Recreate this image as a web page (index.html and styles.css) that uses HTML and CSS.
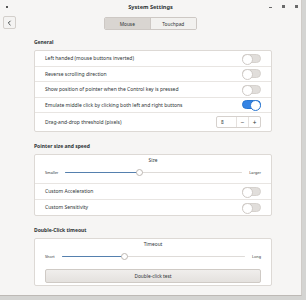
FILE: index.html
```html
<!DOCTYPE html>
<html lang="en">
<head>
    <meta charset="UTF-8">
    <title>System Settings</title>
    <link rel="stylesheet" href="styles.css">
</head>
<body>
<div class="window">
    <div class="titlebar">
        <span class="menu-dot"></span>
        <span class="title">System Settings</span>
        <div class="controls">
            <span class="ctl min"></span>
            <span class="ctl max"></span>
            <span class="ctl close"></span>
        </div>
    </div>

    <div class="headerbar">
        <button class="back">
            <svg width="5" height="6" viewBox="0 0 5 6"><path d="M3.5 0.8 L1.3 3 L3.5 5.2" fill="none" stroke="#2e3436" stroke-width="0.9"/></svg>
        </button>
        <div class="switcher">
            <span class="tab active">Mouse</span>
            <span class="tab">Touchpad</span>
        </div>
    </div>

    <div class="content">
        <h3>General</h3>
        <div class="listbox">
            <div class="row"><span>Left handed (mouse buttons inverted)</span><span class="switch"></span></div>
            <div class="row"><span>Reverse scrolling direction</span><span class="switch"></span></div>
            <div class="row"><span>Show position of pointer when the Control key is pressed</span><span class="switch"></span></div>
            <div class="row"><span>Emulate middle click by clicking both left and right buttons</span><span class="switch on"></span></div>
            <div class="row tall">
                <span>Drag-and-drop threshold (pixels)</span>
                <div class="spin">
                    <span class="value">8</span>
                    <span class="step">&minus;</span>
                    <span class="step">+</span>
                </div>
            </div>
        </div>

        <h3>Pointer size and speed</h3>
        <div class="listbox">
            <div class="row scale-row">
                <div class="scale-title">Size</div>
                <div class="scale">
                    <span class="mark">Smaller</span>
                    <div class="track"><div class="fill" style="width: 42%"></div><span class="thumb"></span></div>
                    <span class="mark">Larger</span>
                </div>
            </div>
            <div class="row"><span>Custom Acceleration</span><span class="switch"></span></div>
            <div class="row"><span>Custom Sensitivity</span><span class="switch"></span></div>
        </div>

        <h3>Double-Click timeout</h3>
        <div class="listbox">
            <div class="row scale-row plain">
                <div class="scale-title">Timeout</div>
                <div class="scale">
                    <span class="mark">Short</span>
                    <div class="track"><div class="fill" style="width: 34%"></div><span class="thumb"></span></div>
                    <span class="mark">Long</span>
                </div>
            </div>
            <div class="row button-row">
                <button class="test">Double-click test</button>
            </div>
        </div>
    </div>
</div>
</body>
</html>
```

FILE: styles.css
```css
* {
    margin: 0;
    padding: 0;
    box-sizing: border-box;
    font-family: 'Noto Sans', 'Liberation Sans', sans-serif;
}

body {
    background: #d4d4d2;
    width: 306px;
    height: 300px;
    overflow: hidden;
}

.window {
    width: 302px;
    height: 296px;
    background: #f6f5f4;
    color: #2e3436;
    border-right: 1px solid #cfcbc7;
    border-bottom: 1px solid #bdb9b5;
}

.titlebar {
    position: relative;
    height: 14px;
    display: flex;
    justify-content: center;
    align-items: center;
}

.title {
    font-size: 5.6px;
    font-weight: 700;
}

.menu-dot {
    position: absolute;
    left: 6px;
    top: 6px;
    width: 2px;
    height: 2px;
    background: #555;
}

.controls {
    position: absolute;
    right: 3px;
    top: 5px;
    display: flex;
    gap: 10px;
    align-items: center;
}

.ctl {
    display: block;
    width: 3px;
    height: 3px;
    background: #6a6a6a;
}

.ctl.min {
    height: 1px;
    margin-top: 2px;
}

.headerbar {
    position: relative;
    height: 19px;
    display: flex;
    justify-content: center;
    align-items: flex-start;
    padding-top: 3px;
}

.back {
    position: absolute;
    left: 3px;
    top: 2px;
    width: 13px;
    height: 13px;
    border: 1px solid #d3cfcb;
    border-radius: 2px;
    background: #f4f3f2;
    display: flex;
    justify-content: center;
    align-items: center;
}

.switcher {
    display: flex;
    border: 1px solid #cdc8c4;
    border-radius: 2px;
    overflow: hidden;
}

.tab {
    width: 45.5px;
    height: 11px;
    font-size: 4.8px;
    display: flex;
    justify-content: center;
    align-items: center;
    background: #f2f1ef;
}

.tab.active {
    background: #d9d5d1;
    border-right: 1px solid #cdc8c4;
}

.content {
    padding: 5px 0 0 34px;
}

h3 {
    font-size: 5px;
    font-weight: 700;
    height: 8px;
    line-height: 8px;
    margin-bottom: 4px;
}

.listbox {
    width: 238px;
    background: #fff;
    border: 1px solid #ddd9d5;
    border-radius: 2px;
    margin-bottom: 10px;
}

.row {
    height: 15.5px;
    display: flex;
    justify-content: space-between;
    align-items: center;
    padding: 0 10px;
    font-size: 5px;
    border-bottom: 1px solid #e8e5e2;
}

.row:last-child {
    border-bottom: none;
}

.row.tall {
    height: 18px;
}

.switch {
    position: relative;
    width: 19px;
    height: 9px;
    border-radius: 5px;
    background: #e1dedb;
    border: 1px solid #d6d2ce;
}

.switch::after {
    content: '';
    position: absolute;
    left: -1px;
    top: -1px;
    width: 9px;
    height: 9px;
    border-radius: 50%;
    background: #fff;
    border: 1px solid #cfcac6;
}

.switch.on {
    background: #3584e4;
    border-color: #2a76d0;
}

.switch.on::after {
    left: auto;
    right: -1px;
    border-color: #2a76d0;
}

.spin {
    display: flex;
    height: 12px;
    width: 45px;
    border: 1px solid #d6d1cd;
    border-radius: 2px;
    font-size: 4.8px;
}

.spin .value {
    flex: 1;
    padding-left: 4px;
    display: flex;
    align-items: center;
}

.spin .step {
    width: 12px;
    display: flex;
    justify-content: center;
    align-items: center;
    border-left: 1px solid #e5e1de;
    font-size: 6.5px;
}

.scale-row {
    height: 29px;
    flex-direction: column;
    align-items: stretch;
    justify-content: flex-start;
    padding-top: 2px;
}

.scale-row.plain {
    height: 28px;
    border-bottom: none;
}

.scale-title {
    text-align: center;
    font-size: 4.8px;
    line-height: 6px;
}

.scale {
    display: flex;
    align-items: center;
    gap: 7px;
    margin-top: 7px;
}

.mark {
    font-size: 3.8px;
}

.track {
    position: relative;
    flex: 1;
    height: 1.5px;
    background: #dedbd8;
    border-radius: 1px;
}

.fill {
    height: 100%;
    background: #5580ae;
    border-radius: 1px;
}

.thumb {
    position: absolute;
    top: -3px;
    width: 7px;
    height: 7px;
    margin-left: -3.5px;
    border-radius: 50%;
    background: #fff;
    border: 1px solid #bdb7b2;
}

.scale-row:first-child .thumb {
    left: 42%;
}

.scale-row.plain .thumb {
    left: 34%;
}

.button-row {
    height: 18px;
    align-items: flex-start;
    padding-top: 2px;
}

.test {
    width: 100%;
    height: 14px;
    font-size: 4.8px;
    color: #2e3436;
    border: 1px solid #cfcac5;
    border-radius: 2px;
    background: linear-gradient(#f0eeec, #e4e1de);
}
```
